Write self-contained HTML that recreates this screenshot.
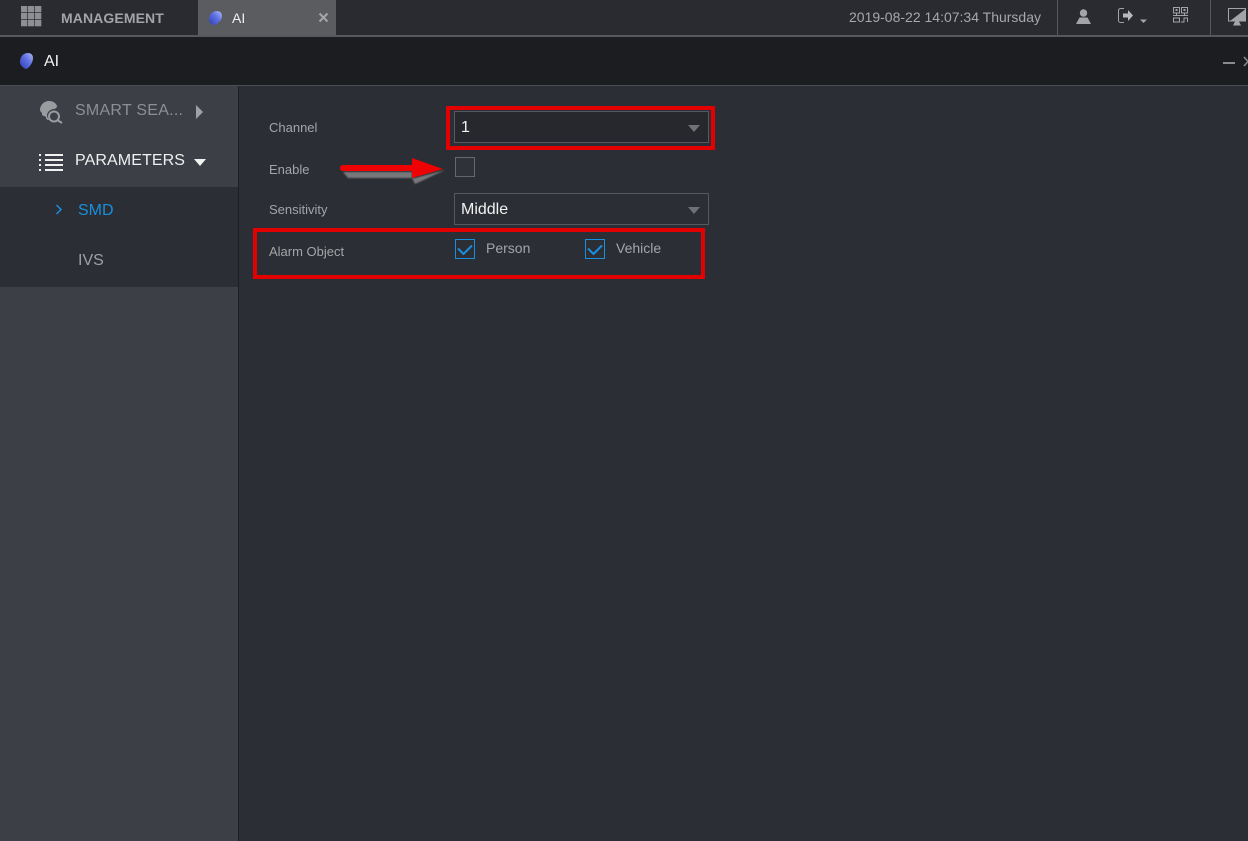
<!DOCTYPE html>
<html><head><meta charset="utf-8"><style>
html,body{margin:0;padding:0;background:#2b2e34}
#r{position:relative;width:1248px;height:841px;overflow:hidden;background:#2b2e34;font-family:"Liberation Sans",sans-serif}
#r div{position:absolute;white-space:nowrap}
#r svg{position:absolute;overflow:visible}
.t{line-height:20px}
</style></head><body><div id="r">
<svg width="0" height="0" style="left:0;top:0"><defs>
<linearGradient id="g" x1="1" y1="0" x2="0" y2="1"><stop offset="0" stop-color="#aeb9f2"/><stop offset=".45" stop-color="#5f70e2"/><stop offset="1" stop-color="#2f3fb5"/></linearGradient>
<filter id="b" x="-10%" y="-50%" width="120%" height="200%"><feGaussianBlur stdDeviation="0.8"/></filter>
</defs></svg>
<div style="left:0;top:0;width:1248px;height:35px;background:#2a2b31"></div>
<div style="left:0;top:35px;width:1248px;height:2px;background:#55585c"></div>
<div style="left:198px;top:0;width:138px;height:35px;background:#5a5c60"></div>
<div style="left:0;top:37px;width:1248px;height:48px;background:#1b1d21"></div>
<div style="left:0;top:85px;width:1248px;height:1px;background:#4a4d51"></div>
<div style="left:0;top:86px;width:238px;height:755px;background:#3c3f46"></div>
<div style="left:238px;top:86px;width:1px;height:755px;background:#1d1f23"></div>
<div style="left:0;top:187px;width:238px;height:100px;background:#2b2e34"></div>

<svg style="left:21px;top:6px" width="20" height="20"><g fill="#8e8f92"><rect x="0" y="0" width="6.300" height="6.300"/><rect x="7" y="0" width="6.300" height="6.300"/><rect x="14" y="0" width="6.300" height="6.300"/><rect x="0" y="7" width="6.300" height="6.300"/><rect x="7" y="7" width="6.300" height="6.300"/><rect x="14" y="7" width="6.300" height="6.300"/><rect x="0" y="14" width="6.300" height="6.300"/><rect x="7" y="14" width="6.300" height="6.300"/><rect x="14" y="14" width="6.300" height="6.300"/></g></svg>
<div class="t" style="left:61px;top:8px;font-size:14px;font-weight:bold;letter-spacing:.1px;color:#a3a4a7">MANAGEMENT</div>
<svg style="left:209px;top:11px" width="13" height="14"><path d="M0 8C0 3 4 0 8 0c3 0 5 2 5 5 0 4-4 8-8 9C2 14 0 11 0 8z" fill="url(#g)"/></svg>
<div class="t" style="left:232px;top:8px;font-size:14px;color:#f0f0f0">AI</div>
<svg style="left:319px;top:13px" width="9" height="9"><path d="M.5.5l8 8M8.500.5l-8 8" stroke="#a5a6a8" stroke-width="2"/></svg>

<svg style="left:20px;top:53px" width="13" height="16"><path d="M0 9C0 4 3 0 8 0c3 0 5 2 5 5 0 5-4 10-7 11C3 15 0 12 0 9z" fill="url(#g)"/></svg>
<div class="t" style="left:44px;top:52px;font-size:16px;color:#f2f2f2">AI</div>

<div class="t" style="left:849px;top:7px;font-size:14px;color:#a6a7a9">2019-08-22 14:07:34 Thursday</div>
<div style="left:1057px;top:0;width:1px;height:35px;background:#55585c"></div>
<div style="left:1210px;top:0;width:1px;height:35px;background:#55585c"></div>
<svg style="left:1076px;top:9px" width="15" height="15"><circle cx="7.500" cy="4" r="3.700" fill="#a3a4a7"/><path d="M0 15l3.500-6.500h8L15 15z" fill="#a3a4a7"/></svg>
<svg style="left:1118px;top:8px" width="30" height="16"><path d="M6 .5H2.500a2 2 0 0 0-2 2v10a2 2 0 0 0 2 2H6" fill="none" stroke="#a3a4a7"/><path d="M5 5.500h5V2l5 5.500-5 5.500V9.500H5z" fill="#b8b9bb"/><path d="M22 11.500h7L25.500 15z" fill="#a3a4a7"/></svg>
<svg style="left:1173px;top:7px" width="15" height="16" fill="none" stroke="#a3a4a7"><rect x=".5" y=".5" width="6" height="5.500"/><rect x="8.500" y=".5" width="6" height="5.500"/><path d="M3.500 6v2M11.500 6v2"/><path d="M0 8.500h15"/><rect x=".5" y="11" width="6" height="4"/><path d="M8 15h3v-4h3.500v4"/><rect x="2.500" y="2" width="2" height="2" fill="#a3a4a7" stroke="none"/><rect x="10.500" y="2" width="2" height="2" fill="#a3a4a7" stroke="none"/></svg>
<svg style="left:1228px;top:8px" width="18" height="18"><rect x=".5" y=".5" width="17" height="12.500" fill="#2a2b31" stroke="#a3a4a7"/><path d="M2 13L17 1.500V13z" fill="#a3a4a7"/><path d="M7 13.500h4l2 4H5z" fill="#a3a4a7"/></svg>
<div style="left:1223px;top:62px;width:12px;height:2px;background:#8a8b8e"></div>
<svg style="left:1243px;top:56px" width="6" height="11"><path d="M1 1l8 9M9 1l-8 9" stroke="#8a8b8e" stroke-width="1.500"/></svg>

<svg style="left:40px;top:101px" width="23" height="22"><path d="M0 9C0 4 4 0 9 0c4 0 7 2 8 5 0 2-2 3-4 3-4 1-6 4-6 6 0 2 1 3 2 5-2 0-3-1-3-3-1-1-3-1-4-2 0-1 0-2 0-2-1-1-2-2-2-3z" fill="#9a9ca0"/><circle cx="14" cy="15.500" r="5" fill="#3c3f46" stroke="#9a9ca0" stroke-width="2"/><path d="M18 19.500l4 2.500" stroke="#9a9ca0" stroke-width="2"/></svg>
<div class="t" style="left:75px;top:101px;font-size:16px;letter-spacing:.25px;color:#8d8f93">SMART SEA...</div>
<svg style="left:196px;top:105px" width="8" height="14"><path d="M0 0l7 7-7 7z" fill="#a0a1a4"/></svg>
<svg style="left:39px;top:154px" width="24" height="17"><g fill="#f2f2f2"><rect x="0" y="0" width="2" height="2"/><rect x="0" y="5" width="2" height="2"/><rect x="0" y="10" width="2" height="2"/><rect x="0" y="15" width="2" height="2"/><rect x="6" y="0" width="18" height="2"/><rect x="6" y="5" width="18" height="2"/><rect x="6" y="10" width="18" height="2"/><rect x="6" y="15" width="18" height="2"/></g></svg>
<div class="t" style="left:75px;top:151px;font-size:16px;letter-spacing:.1px;color:#f0f0f0">PARAMETERS</div>
<svg style="left:194px;top:159px" width="12" height="7"><path d="M0 0h12L6 7z" fill="#f2f2f2"/></svg>
<svg style="left:55px;top:204px" width="8" height="11"><path d="M1.500 1l4.500 4.500L1.500 10" fill="none" stroke="#1a8fdd" stroke-width="1.500"/></svg>
<div class="t" style="left:78px;top:201px;font-size:16px;color:#1a8fdd">SMD</div>
<div class="t" style="left:78px;top:251px;font-size:16px;color:#9fa0a3">IVS</div>

<div class="t" style="left:269px;top:118px;font-size:13px;color:#a4a5a8">Channel</div>
<div class="t" style="left:269px;top:160px;font-size:13px;color:#a4a5a8">Enable</div>
<div class="t" style="left:269px;top:200px;font-size:13px;color:#a4a5a8">Sensitivity</div>
<div class="t" style="left:269px;top:242px;font-size:13px;color:#a4a5a8">Alarm Object</div>

<div style="left:454px;top:111px;width:253px;height:30px;border:1px solid #55585e;background:#26282e"></div>
<div class="t" style="left:461px;top:118px;font-size:16px;color:#f2f2f2">1</div>
<svg style="left:688px;top:125px" width="12" height="7"><path d="M0 0h12L6 7z" fill="#6f7175"/></svg>
<div style="left:446px;top:106px;width:261px;height:36px;border:4px solid #e30000"></div>

<div style="left:455px;top:157px;width:18px;height:18px;border:1px solid #65676c;background:#2f3238"></div>
<svg style="left:340px;top:157px" width="108" height="28">
<path d="M3 15h69v6l3 6L105 13 75 21H8z" fill="#77787a" filter="url(#b)"/>
<path d="M0 11.500a3 3 0 0 1 3-3.500h69V1l31 11-31 9v-7H3a3 3 0 0 1-3-2.500z" fill="#ee0202"/></svg>

<div style="left:454px;top:193px;width:253px;height:30px;border:1px solid #55585e;background:#2b2e34"></div>
<div class="t" style="left:461px;top:200px;font-size:16px;color:#f2f2f2">Middle</div>
<svg style="left:688px;top:207px" width="12" height="7"><path d="M0 0h12L6 7z" fill="#6f7175"/></svg>

<div style="left:253px;top:228px;width:444px;height:43px;border:4px solid #e30000"></div>
<div style="left:455px;top:239px;width:18px;height:18px;border:1px solid #1a8fdd"></div>
<svg style="left:457px;top:243px" width="16" height="14"><path d="M1 5.500l5.500 5.500L15 2.500" fill="none" stroke="#1a8fdd" stroke-width="2"/></svg>
<div class="t" style="left:486px;top:238px;font-size:14px;color:#a4a5a8">Person</div>
<div style="left:585px;top:239px;width:18px;height:18px;border:1px solid #1a8fdd"></div>
<svg style="left:587px;top:243px" width="16" height="14"><path d="M1 5.500l5.500 5.500L15 2.500" fill="none" stroke="#1a8fdd" stroke-width="2"/></svg>
<div class="t" style="left:616px;top:238px;font-size:14px;color:#a4a5a8">Vehicle</div>
</div></body></html>
